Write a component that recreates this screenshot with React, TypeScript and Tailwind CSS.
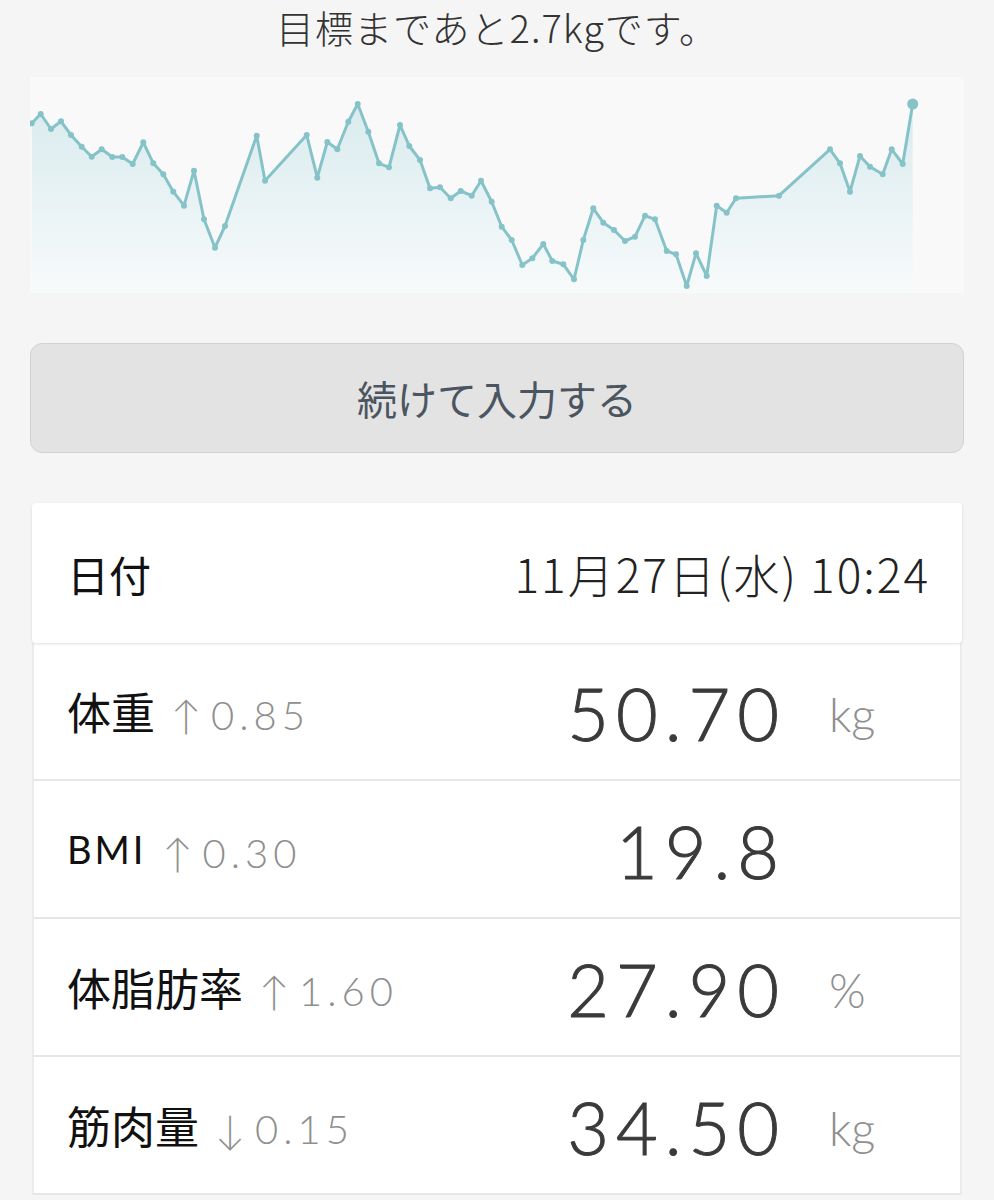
import React from "react";

const points: [number, number][] = [
  [31.7, 123.3], [40.7, 114], [51, 129], [61, 121.3], [71, 135], [81.7, 146.7], [91.7, 156.7],
  [101.7, 149.3], [112.3, 157], [122.3, 157], [132.7, 164], [143.3, 142.3], [153.3, 163.3],
  [163.3, 174.3], [173.3, 191.7], [184, 205.7], [194, 170.7], [204, 219.3], [215, 247.7],
  [225, 226], [256.7, 135.7], [265, 180.7], [306.7, 135], [317.3, 177.7], [327.3, 142],
  [337.3, 149.3], [348.3, 121.7], [357.7, 104], [368.3, 131.7], [379, 163.3], [389, 167.3],
  [400, 125], [409.3, 146], [420, 160], [430, 188.3], [440, 187.3], [450.7, 198.3],
  [460.7, 191], [471.7, 195.7], [481, 180.7], [491.7, 201.7], [501.7, 226.7], [511.7, 240],
  [522.3, 265], [532.3, 258.3], [543.3, 244], [552.3, 261], [563.3, 264.3], [574, 279.3],
  [583.3, 240], [593.3, 208.3], [603.3, 222.7], [614, 230], [625, 241], [635, 236.7],
  [645, 215.7], [655, 219.3], [666.7, 251], [676, 254.3], [686.7, 286], [696, 253.3],
  [706.7, 276], [716.7, 205.7], [726.7, 212.7], [736, 198.3], [779, 195.7], [830, 149.3],
  [840, 163.3], [850, 191.7], [860, 156], [870, 166.7], [882.7, 174.3], [891.7, 149.3],
  [902.7, 164], [912.7, 104],
];

// chart box sits at (30, 77) on the page
const pts = points.map(([x, y]) => [x - 30, y - 77] as [number, number]);

function WeightChart() {
  const line = pts.map(([x, y], i) => `${i ? "L" : "M"}${x} ${y}`).join(" ");
  const last = pts[pts.length - 1];
  const area = `${line} L${last[0]} 215 L${pts[0][0]} 215 Z`;

  return (
    <div className="mt-[25px] h-[216px] w-full bg-[#f9f9f9]">
      <svg width="934" height="216" viewBox="0 0 934 216">
        <defs>
          <linearGradient id="fill" x1="0" y1="0" x2="0" y2="1">
            <stop offset="0%" stopColor="#d9ebee" />
            <stop offset="100%" stopColor="#f7fafb" />
          </linearGradient>
        </defs>
        <path d={area} fill="url(#fill)" />
        <path d={line} fill="none" stroke="#86c3c8" strokeWidth="3" strokeLinejoin="round" />
        {pts.slice(0, -1).map(([x, y], i) => (
          <circle key={i} cx={x} cy={y} r="3" fill="#86c3c8" />
        ))}
        <circle cx={last[0]} cy={last[1]} r="5.5" fill="#86c3c8" />
      </svg>
    </div>
  );
}

const rows = [
  { label: "体重", arrow: "↑", delta: "0.85", value: "50.70", unit: "kg" },
  { label: "BMI", arrow: "↑", delta: "0.30", value: "19.8", unit: "" },
  { label: "体脂肪率", arrow: "↑", delta: "1.60", value: "27.90", unit: "%" },
  { label: "筋肉量", arrow: "↓", delta: "0.15", value: "34.50", unit: "kg" },
];

const cjk = "font-['Noto_Sans_CJK_JP',sans-serif]";
const latin = "font-['Lato','Noto_Sans_CJK_JP',sans-serif]";

export default function App() {
  return (
    <div className={`min-h-[1200px] w-full overflow-hidden bg-[#f5f5f5] px-[30px] ${cjk}`}>
      <div className="pt-[2px] text-center text-[38px] font-light leading-[50px] tracking-[1px] text-[#333]">
        目標まであと2.7kgです。
      </div>

      <WeightChart />

      <button className="mt-[50px] flex h-[110px] w-full items-center justify-center rounded-[12px] border border-[#d2d2d2] bg-[#e3e3e3] text-[40px] text-[#4b5560]">
        続けて入力する
      </button>

      <div className="mx-[2px] mt-[50px]">
        <div className="relative z-10 flex h-[140px] items-center justify-between rounded-[4px] bg-white pl-[35px] pr-[32px] shadow-[0_1px_3px_rgba(0,0,0,0.12)]">
          <span className="text-[42px] text-[#111]">日付</span>
          <span className="text-[46px] font-light tracking-[2px] text-[#222]">11月27日(水) 10:24</span>
        </div>

        <div className="border-x-2 border-[#ebebeb] bg-white">
          {rows.map((r) => (
            <div key={r.label} className="flex h-[138px] items-center border-b-2 border-[#e6e6e6]">
              <div className="flex flex-1 items-center pl-[33px]">
                <span
                  className={
                    r.label === "BMI"
                      ? `${latin} text-[38px] tracking-[3px] text-[#111]`
                      : "text-[44px] text-[#111]"
                  }
                >
                  {r.label}
                </span>
                <span className={`${latin} ml-[16px] mt-[8px] text-[40px] font-light text-[#8f8f8f]`}>
                  {r.arrow}
                </span>
                <span className={`${latin} ml-[10px] mt-[8px] text-[40px] font-light tracking-[5px] text-[#8f8f8f]`}>
                  {r.delta}
                </span>
              </div>
              <span
                className={`${latin} mt-[4px] text-[72px] font-light tracking-[7px] text-[#3a3a3a] [-webkit-text-stroke:1px_#3a3a3a]`}
              >
                {r.value}
              </span>
              <span className={`${latin} mt-[6px] w-[174px] pl-[43px] text-[47px] font-light text-[#8f8f8f]`}>
                {r.unit}
              </span>
            </div>
          ))}
        </div>
      </div>
    </div>
  );
}
